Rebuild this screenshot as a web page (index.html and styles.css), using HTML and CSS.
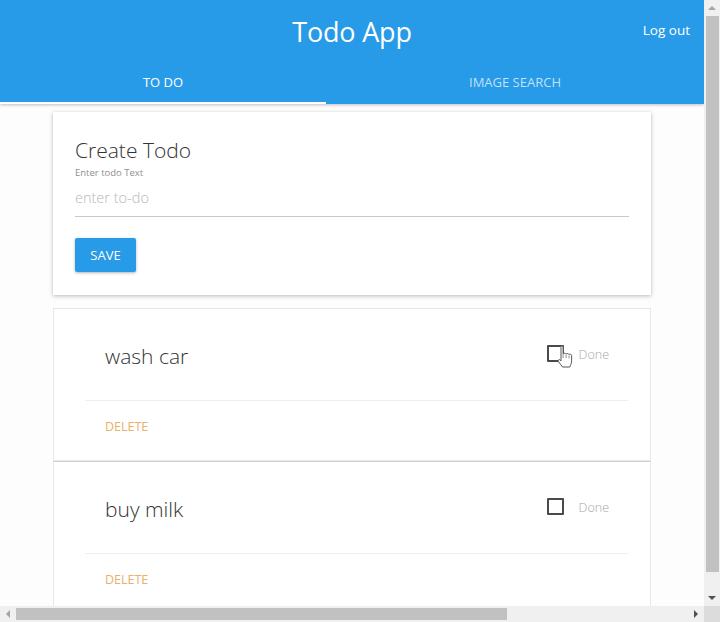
FILE: index.html
```html
<!DOCTYPE html>
<html lang="en">
<head>
<meta charset="utf-8">
<title>Todo App</title>
<link rel="stylesheet" href="styles.css">
</head>
<body>
<div class="window">
  <div class="viewport">
    <header class="appbar">
      <div class="toolbar">
        <h1 class="title">Todo App</h1>
        <a class="logout">Log out</a>
      </div>
      <nav class="tabs">
        <div class="tab tab-todo active">TO DO</div>
        <div class="tab tab-search">IMAGE SEARCH</div>
      </nav>
    </header>
    <main class="content">
      <section class="card create">
        <h2 class="create-title">Create Todo</h2>
        <label class="field-label">Enter todo Text</label>
        <div class="field">enter to-do</div>
        <button class="btn-save">SAVE</button>
      </section>
      <section class="todo">
        <div class="todo-row">
          <span class="todo-text">wash car</span>
          <span class="done">
            <span class="checkbox"></span>
            <svg class="cursor" width="18" height="24" viewBox="0 0 18 24"><path d="M5.5 1c1 0 1.6.7 1.6 1.6v6.2c.4-.7 2.6-.7 3 .3.4-.8 2.6-.7 2.9.4.6-.6 2.6-.4 2.6 1.1v5.2c0 2.6-1.2 4.5-1.8 6.2H6.5C5.4 20.4 3.4 18 2.4 16.5c-.8-1.2.6-2.5 1.700-1.6l.9.9V2.6C5 1.7 4.6 1 5.5 1z" fill="#fff" stroke="#555" stroke-width="1" stroke-linejoin="round"/><path d="M7.1 9v4M10.1 9.5v3.6M13 10.4v3" stroke="#777" stroke-width=".8" fill="none"/></svg>
            <span class="done-label">Done</span>
          </span>
        </div>
        <div class="todo-actions"><span class="btn-delete">DELETE</span></div>
      </section>
      <section class="todo">
        <div class="todo-row">
          <span class="todo-text">buy milk</span>
          <span class="done">
            <span class="checkbox"></span>
            <span class="done-label">Done</span>
          </span>
        </div>
        <div class="todo-actions"><span class="btn-delete">DELETE</span></div>
      </section>
    </main>
  </div>
  <div class="vscroll">
    <div class="sb-btn"><span class="arrow up"></span></div>
    <div class="vtrack"><div class="vthumb"></div></div>
    <div class="sb-btn"><span class="arrow down"></span></div>
  </div>
  <div class="hscroll">
    <div class="sb-btn"><span class="arrow left"></span></div>
    <div class="htrack"><div class="hthumb"></div></div>
    <div class="sb-btn"><span class="arrow right"></span></div>
  </div>
  <div class="corner"></div>
</div>
</body>
</html>
```
FILE: styles.css
```css
* { box-sizing: border-box; }
html, body { margin: 0; padding: 0; }
body {
  font-family: "Open Sans", "Noto Sans", sans-serif;
  background: #fff;
  color: #333;
}
.window {
  width: 720px;
  height: 622px;
  display: grid;
  grid-template-columns: 704px 16px;
  grid-template-rows: 606px 16px;
  overflow: hidden;
}
.viewport {
  overflow: hidden;
  background: #fdfdfd;
}
.appbar {
  background: #279ae8;
  color: #fff;
  height: 104px;
  box-shadow: 0 1px 3px rgba(0,0,0,0.25);
  position: relative;
  z-index: 1;
}
.toolbar {
  height: 64px;
  display: flex;
  align-items: center;
  justify-content: center;
  position: relative;
}
.title {
  margin: 0;
  font-size: 27px;
  font-weight: 400;
  letter-spacing: -0.2px;
  line-height: 36px;
}
.logout {
  position: absolute;
  right: 14px;
  top: 20px;
  font-size: 13.5px;
  line-height: 20px;
  color: #fff;
}
.tabs {
  display: flex;
  height: 40px;
}
.tab {
  display: flex;
  align-items: center;
  justify-content: center;
  font-size: 13px;
  padding-bottom: 2px;
  color: rgba(255,255,255,0.72);
  border-bottom: 2px solid transparent;
}
.tab-todo { width: 326px; }
.tab-search { flex: 1; }
.tab.active {
  color: #fff;
  border-bottom-color: #fff;
}
.content {
  width: 598px;
  margin: 8px auto 0;
}
.card {
  background: #fff;
  box-shadow: 0 1px 4px rgba(0,0,0,0.28);
}
.create {
  padding: 24px 22px 23px;
  display: flex;
  flex-direction: column;
  align-items: flex-start;
  height: 183px;
}
.create-title {
  margin: 0;
  font-size: 21px;
  font-weight: 300;
  line-height: 28px;
  color: #333;
}
.field-label {
  font-size: 9.5px;
  line-height: 14px;
  padding-top: 2px;
  color: #8f8f8f;
}
.field {
  align-self: stretch;
  height: 37px;
  border-bottom: 1.5px solid #c8c8c8;
  font-size: 14.5px;
  font-weight: 300;
  color: #b8b8b8;
  padding-top: 8px;
  line-height: 20px;
}
.btn-save {
  margin-top: 21px;
  width: 61px;
  height: 34px;
  border: 0;
  border-radius: 2px;
  background: #279ae8;
  color: #fff;
  font-family: inherit;
  font-size: 13px;
  box-shadow: 0 1px 3px rgba(0,0,0,0.3);
  padding: 0;
}
.todo {
  margin-top: 13px;
  background: #fff;
  border: 1px solid #e8e8e8;
  height: 153px;
}
.todo + .todo {
  margin-top: 0;
  border-top: 1px solid #d0d0d0;
}
.todo-row {
  height: 92px;
  margin: 0 22px 0 31px;
  border-bottom: 1px solid #efefef;
  display: flex;
  align-items: center;
  justify-content: space-between;
  padding: 3px 19px 0 20px;
}
.todo-text {
  font-size: 21px;
  font-weight: 300;
  color: #333;
}
.done {
  display: flex;
  align-items: center;
  position: relative;
}
.checkbox {
  width: 17px;
  height: 17px;
  border: 2.5px solid #4a4a4a;
  border-radius: 1px;
  margin-right: 15px;
  margin-top: -5px;
}
.done-label {
  font-size: 12.5px;
  font-weight: 300;
  color: #a8a8a8;
  margin-top: -3px;
}
.cursor {
  position: absolute;
  left: 9px;
  top: -4px;
}
.todo-actions {
  padding: 13px 0 0 51px;
}
.btn-delete {
  font-size: 12.5px;
  color: #e8b06a;
  line-height: 16px;
}
.vscroll {
  background: #f0f0f0;
  display: flex;
  flex-direction: column;
}
.vtrack {
  flex: 1;
  display: flex;
  flex-direction: column;
  padding: 0 1px 18px 2px;
}
.vthumb {
  flex: 1;
  background: #c1c1c1;
}
.hscroll {
  background: #f0f0f0;
  display: flex;
}
.htrack {
  flex: 1;
  padding: 2px 0 2px 0;
}
.hthumb {
  width: 491px;
  height: 100%;
  background: #c1c1c1;
}
.sb-btn {
  width: 16px;
  height: 16px;
  display: flex;
  align-items: center;
  justify-content: center;
  flex: none;
}
.arrow { width: 0; height: 0; }
.arrow.up { border-left: 4px solid transparent; border-right: 4px solid transparent; border-bottom: 4px solid #a3a3a3; }
.arrow.down { border-left: 4px solid transparent; border-right: 4px solid transparent; border-top: 4px solid #505050; }
.arrow.left { border-top: 4px solid transparent; border-bottom: 4px solid transparent; border-right: 4px solid #a3a3a3; }
.arrow.right { border-top: 4px solid transparent; border-bottom: 4px solid transparent; border-left: 4px solid #505050; }
.corner { background: #dcdcdc; }
```
